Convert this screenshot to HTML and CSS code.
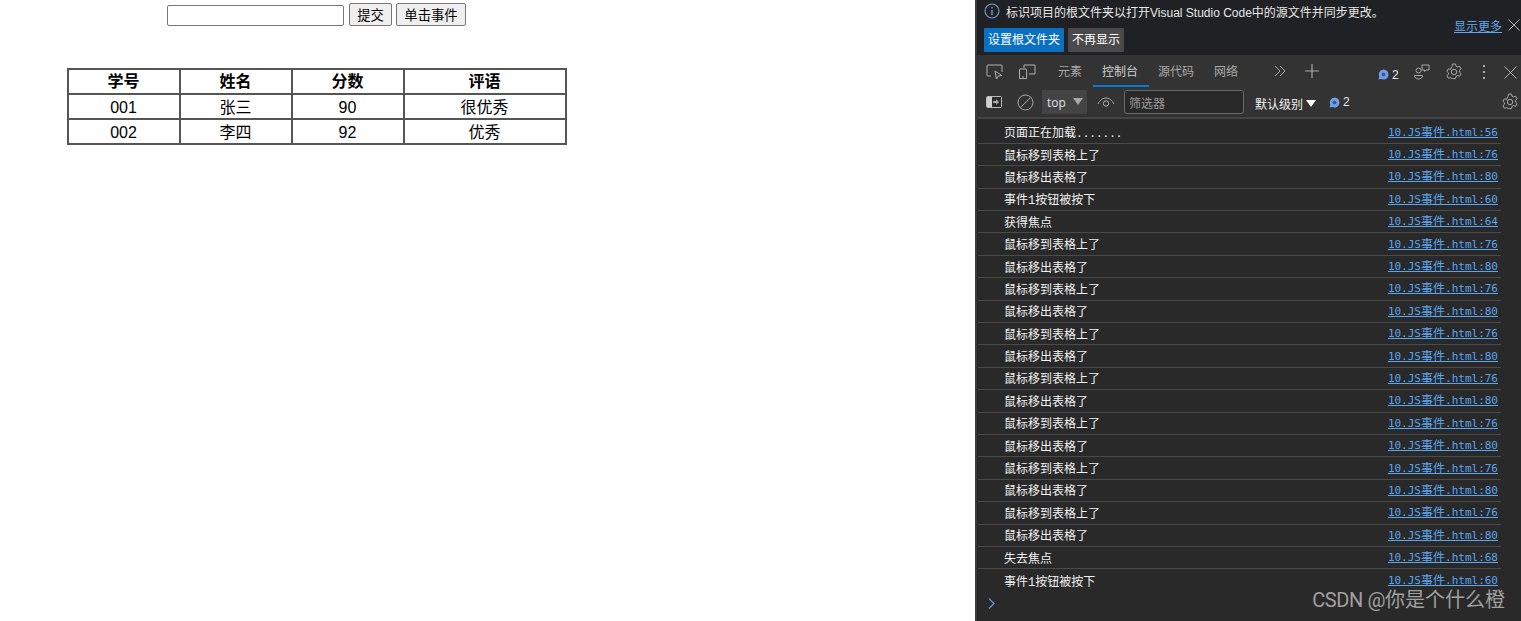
FILE: index.html
```html
<!DOCTYPE html>
<html lang="zh">
<head>
<meta charset="utf-8">
<title>JS事件</title>
<link rel="stylesheet" href="styles.css">
</head>
<body>
<main class="page">
  <form class="form">
    <input class="field" type="text">
    <button class="btn" type="button">提交</button>
    <button class="btn wide" type="button">单击事件</button>
  </form>
  <table class="grades">
    <tr><th class="c1">学号</th><th class="c1">姓名</th><th class="c1">分数</th><th class="c4">评语</th></tr>
    <tr><td>001</td><td>张三</td><td>90</td><td>很优秀</td></tr>
    <tr><td>002</td><td>李四</td><td>92</td><td>优秀</td></tr>
  </table>
</main>
<aside class="devtools">
  <div class="info">
    <div class="info-top">
      <svg class="info-icon" width="16" height="16" viewBox="0 0 16 16"><circle cx="8" cy="8" r="7" fill="none" stroke="#6f9fd8" stroke-width="1.1"/><path d="M8 4v1.6M8 7v5" stroke="#8db4e6" stroke-width="1.2"/></svg>
      <span>标识项目的根文件夹以打开Visual Studio Code中的源文件并同步更改。</span>
    </div>
    <div class="info-bottom">
      <span class="ibtn primary">设置根文件夹</span>
      <span class="ibtn">不再显示</span>
      <span class="more">显示更多</span>
      <svg class="x" width="12" height="12" viewBox="0 0 12 12"><path d="M.5.5l11 11M11.500.5l-11 11" stroke="#b5b5b5" fill="none"/></svg>
    </div>
  </div>
  <div class="tabs">
    <svg class="tool-a" width="18" height="16" viewBox="0 0 18 16"><path d="M5 12H2a1 1 0 0 1-1-1V2a1 1 0 0 1 1-1h13a1 1 0 0 1 1 1v6M9 7l1.500 8 1.800-3 3.500-.5z" fill="none" stroke="#b0b0b0"/></svg>
    <svg class="tool-b" width="17" height="16" viewBox="0 0 17 16"><path d="M5 4V1h11v9H10M1 5h6a.6.6 0 0 1 .6.600v9H.5V5.600A.6.600 0 0 1 1 5zM3 13h2" fill="none" stroke="#b0b0b0"/></svg>
    <span class="tab first">元素</span>
    <span class="tab active">控制台</span>
    <span class="tab">源代码</span>
    <span class="tab">网络</span>
    <svg class="chev" width="12" height="12" viewBox="0 0 12 12"><path d="M1 1l5 5-5 5M6 1l5 5-5 5" fill="none" stroke="#a8a8a8"/></svg>
    <svg class="plus" width="14" height="14" viewBox="0 0 14 14"><path d="M7 0v14M0 7h14" stroke="#a8a8a8" stroke-width="1.200"/></svg>
    <span class="badge tabs-badge"><svg width="11" height="11" viewBox="0 0 11 11"><path d="M5.500.5a5 5 0 1 1-2 9.600L.5 10.500l.8-2.800A5 5 0 0 1 5.500.5z" fill="#6f9fe8"/><circle cx="5.500" cy="5.500" r="2" fill="#3a5a98"/></svg>2</span>
    <svg class="people" width="16" height="16" viewBox="0 0 16 16"><circle cx="4.500" cy="6.500" r="2.500" fill="none" stroke="#a8a8a8"/><path d="M.5 11.500h8c0 2-1.500 3.500-4 3.500s-4-1.500-4-3.500zM8 1h7v5h-3l-1.500 1.500V6H8z" fill="none" stroke="#a8a8a8"/></svg>
    <svg class="gear" width="18" height="18" viewBox="0 0 18 18"><circle cx="9" cy="9" r="2.700" fill="none" stroke="#a8a8a8"/><path d="M7.500 1h3l.5 2.200 1.500.8 2.100-.7 1.500 2.600-1.600 1.500v1.800l1.600 1.500-1.500 2.600-2.100-.7-1.500.8-.5 2.200h-3L7 15.400l-1.500-.8-2.100.7-1.500-2.600 1.600-1.500V9.900L1.900 8.400l1.500-2.600 2.100.7L7 3.200z" fill="none" stroke="#a8a8a8"/></svg>
    <svg class="dots" width="4" height="14" viewBox="0 0 4 14"><path d="M1 0h2v2H1zM1 6h2v2H1zM1 12h2v2H1z" fill="#b0b0b0"/></svg>
    <svg class="tabs-x" width="13" height="13" viewBox="0 0 13 13"><path d="M.5.500l12 12M12.500.5l-12 12" stroke="#b5b5b5" fill="none"/></svg>
  </div>
  <div class="filter">
    <svg class="sidebar" width="16" height="12" viewBox="0 0 16 12"><rect x=".5" y=".5" width="15" height="11" rx="1" fill="#2a2a2a" stroke="#bcbcbc"/><rect x="1" y="1" width="5" height="10" fill="#d0d0d0"/><path d="M7 6h4" stroke="#a8a8a8" stroke-width="2" fill="none"/><path d="M10 3l3 3-3 3z" fill="#a8a8a8"/></svg>
    <svg class="clear" width="17" height="17" viewBox="0 0 17 17"><circle cx="8.500" cy="8.500" r="7.500" fill="none" stroke="#a8a8a8"/><path d="M3.200 13.800L13.800 3.200" stroke="#a8a8a8"/></svg>
    <span class="top">top<i class="caret"></i></span>
    <svg class="eye" width="18" height="10" viewBox="0 0 18 10"><path d="M1 7c2-4 5-6 8-6s6 2 8 6" fill="none" stroke="#b0b0b0"/><circle cx="9" cy="6.500" r="2.700" fill="none" stroke="#b0b0b0"/></svg>
    <span class="search">筛选器</span>
    <span class="level">默认级别<i class="caret white"></i></span>
    <span class="badge filter-badge"><svg width="11" height="11" viewBox="0 0 11 11"><path d="M5.500.5a5 5 0 1 1-2 9.600L.5 10.500l.8-2.800A5 5 0 0 1 5.500.5z" fill="#6f9fe8"/><circle cx="5.500" cy="5.500" r="2" fill="#3a5a98"/></svg>2</span>
    <svg class="gear filter-gear" width="18" height="18" viewBox="0 0 18 18"><circle cx="9" cy="9" r="2.700" fill="none" stroke="#a8a8a8"/><path d="M7.500 1h3l.5 2.200 1.500.8 2.100-.7 1.500 2.600-1.600 1.500v1.800l1.600 1.500-1.500 2.600-2.100-.7-1.500.8-.5 2.200h-3L7 15.400l-1.500-.8-2.100.7-1.500-2.600 1.600-1.500V9.900L1.900 8.400l1.500-2.600 2.100.7L7 3.200z" fill="none" stroke="#a8a8a8"/></svg>
  </div>
  <div class="log">
    <div class="row"><span>页面正在加载<b>.......</b></span><a>10.JS<b>事件</b>.html:56</a></div>
    <div class="row"><span>鼠标移到表格上了</span><a>10.JS<b>事件</b>.html:76</a></div>
    <div class="row"><span>鼠标移出表格了</span><a>10.JS<b>事件</b>.html:80</a></div>
    <div class="row"><span>事件1按钮被按下</span><a>10.JS<b>事件</b>.html:60</a></div>
    <div class="row"><span>获得焦点</span><a>10.JS<b>事件</b>.html:64</a></div>
    <div class="row"><span>鼠标移到表格上了</span><a>10.JS<b>事件</b>.html:76</a></div>
    <div class="row"><span>鼠标移出表格了</span><a>10.JS<b>事件</b>.html:80</a></div>
    <div class="row"><span>鼠标移到表格上了</span><a>10.JS<b>事件</b>.html:76</a></div>
    <div class="row"><span>鼠标移出表格了</span><a>10.JS<b>事件</b>.html:80</a></div>
    <div class="row"><span>鼠标移到表格上了</span><a>10.JS<b>事件</b>.html:76</a></div>
    <div class="row"><span>鼠标移出表格了</span><a>10.JS<b>事件</b>.html:80</a></div>
    <div class="row"><span>鼠标移到表格上了</span><a>10.JS<b>事件</b>.html:76</a></div>
    <div class="row"><span>鼠标移出表格了</span><a>10.JS<b>事件</b>.html:80</a></div>
    <div class="row"><span>鼠标移到表格上了</span><a>10.JS<b>事件</b>.html:76</a></div>
    <div class="row"><span>鼠标移出表格了</span><a>10.JS<b>事件</b>.html:80</a></div>
    <div class="row"><span>鼠标移到表格上了</span><a>10.JS<b>事件</b>.html:76</a></div>
    <div class="row"><span>鼠标移出表格了</span><a>10.JS<b>事件</b>.html:80</a></div>
    <div class="row"><span>鼠标移到表格上了</span><a>10.JS<b>事件</b>.html:76</a></div>
    <div class="row"><span>鼠标移出表格了</span><a>10.JS<b>事件</b>.html:80</a></div>
    <div class="row"><span>失去焦点</span><a>10.JS<b>事件</b>.html:68</a></div>
    <div class="row last"><span>事件1按钮被按下</span><a>10.JS<b>事件</b>.html:60</a></div>
  </div>
  <div class="prompt">
    <svg width="7" height="11" viewBox="0 0 7 11"><path d="M1 .5l5 5-5 5" fill="none" stroke="#5f94e0" stroke-width="1.300"/></svg>
  </div>
  <div class="watermark"><span class="wm-latin">CSDN @</span>你是个什么橙</div>
</aside>
</body>
</html>
```
FILE: styles.css
```css
* { box-sizing: border-box; }
html, body { margin: 0; height: 100%; }
body {
  display: flex;
  height: 621px;
  overflow: hidden;
  background: #fff;
  font-family: "Liberation Sans", "Noto Sans CJK SC", sans-serif;
}
.page { width: 975px; flex: none; }
.form {
  width: 633px;
  padding-top: 3px;
  display: flex;
  justify-content: center;
  align-items: center;
  gap: 4px;
  height: 26px;
}
.field {
  width: 177px;
  height: 21px;
  margin: 2px 1px 0 0;
  border: 1px solid #767676;
  border-radius: 2px;
  background: #fff;
}
.btn {
  height: 23px;
  width: 43px;
  padding: 0;
  font: 13.33px "Liberation Sans", "Noto Sans CJK SC", sans-serif;
  color: #000;
  background: #efefef;
  border: 1px solid #767676;
  border-radius: 2px;
}
.wide { width: 70px; }
.grades {
  margin: 42px 0 0 67px;
  border-collapse: separate;
  border-spacing: 0;
  border: 1px solid #555;
  border-width: 1px;
  table-layout: fixed;
  width: 500px;
  font-size: 16px;
  color: #000;
}
.grades th, .grades td {
  height: 25px;
  padding: 0 1px 0 0;
  text-align: center;
  border: 1px solid #555;
  font-weight: normal;
  line-height: 23px;
}
.grades td { padding-top: 2px; line-height: 21px; }
.grades th { font-weight: bold; }
.c1 { width: 112px; }
.devtools {
  position: relative;
  width: 546px;
  flex: none;
  background: #292929;
  color: #fff;
  font-size: 12px;
  display: flex;
  flex-direction: column;
  border-left: 2px solid #3a3a3a;
  overflow: hidden;
}
.info { height: 55px; background: #202124; padding: 2px 0 0 7px; flex: none; }
.info-top { display: flex; align-items: center; gap: 6px; height: 18px; color: #e8e8e8; }
.info-bottom { display: flex; align-items: center; gap: 4px; margin-top: 8px; position: relative; }
.ibtn {
  height: 24px;
  line-height: 25px;
  padding: 0 4px;
  background: #4a4a4a;
  border-radius: 1px;
  color: #fff;
}
.primary { background: #0a70c2; }
.more {
  margin-left: auto;
  margin-right: 2px;
  color: #62a8e8;
  text-decoration: underline;
  position: relative;
  top: -15px;
}
.x { margin-right: 1px; position: relative; top: -15px; }
.tabs {
  height: 32px;
  background: #333;
  display: flex;
  align-items: center;
  padding-left: 9px;
  flex: none;
}
.tabs > svg { margin-top: 2px; }
.tool-b { margin-left: 15px; margin-right: 14px; }
.tab { color: #a8a8a8; height: 32px; line-height: 35px; padding: 0 9px; margin-right: 2px; }
.first { margin-right: 1px; padding: 0 10px 0 8px; }
.active { color: #d0d0d0; border-bottom: 2px solid #0a78d4; width: 56px; padding: 0 9px; margin-right: 0; }
.tabs .chev { margin-left: 25px; margin-top: 0; }
.tabs .plus { margin-left: 19px; margin-top: 0; }
.badge { display: inline-flex; align-items: center; gap: 3px; color: #e8e8e8; font-size: 12px; }
.tabs-badge { margin-left: 59px; margin-top: 7px; }
.people { margin-left: 15px; }
.tabs .gear { margin-left: 15px; }
.dots { margin-left: 19px; }
.tabs-x { margin-left: 18px; }
.filter {
  height: 32px;
  background: #333;
  border-bottom: 2px solid #444;
  display: flex;
  align-items: center;
  padding-left: 9px;
  flex: none;
}
.clear { margin-left: 15px; }
.top {
  margin-left: 8px;
  width: 45px;
  height: 24px;
  background: #444;
  line-height: 26px;
  padding-left: 5px;
  color: #e0e0e0;
  font-size: 12px;
  font-family: "Open Sans", sans-serif;
}
.caret {
  display: inline-block;
  margin-left: 7px;
  border: 5px solid transparent;
  border-top: 7px solid #a8a8a8;
  border-bottom: 0;
  position: relative;
  top: -2px;
}
.caret.white { border-top-color: #fff; margin-left: 3px; }
.eye { margin-left: 10px; }
.search {
  margin-left: 9px;
  width: 120px;
  height: 24px;
  border: 1px solid #6a6a6a;
  border-radius: 3px;
  background: #292929;
  padding-left: 4px;
  line-height: 26px;
  color: #9a9a9a;
}
.level { margin-left: 11px; color: #f0f0f0; white-space: nowrap; padding-top: 2px; }
.filter-badge { margin-left: 13px; }
.filter-gear { margin-left: auto; margin-right: 2px; }
.log { flex: 1; overflow: hidden; padding: 2.5px 20px 0 1px; }
.row {
  height: 22.4px;
  display: flex;
  justify-content: space-between;
  align-items: center;
  padding: 0 3px 0 26px;
  border-bottom: 1px solid #4a4a4a;
}
.last { border-bottom: 0; }
.row span { color: #f2f2f2; font-family: "Liberation Mono", "Noto Sans CJK SC", monospace; font-size: 12px; }
.row span b { font: 11px "DejaVu Sans Mono", monospace; }
.row a { color: #5aa6ef; text-decoration: underline; font-family: "DejaVu Sans Mono", "Noto Sans CJK SC", monospace; font-size: 11px; }
.row a b { font: 12px/1 "Noto Sans CJK SC", sans-serif; vertical-align: -1px; }
.prompt { height: 27px; flex: none; padding: 4px 0 0 11px; }
.watermark {
  position: absolute;
  right: 16px;
  bottom: 8px;
  font-size: 20px;
  color: #a0a0a0;
}
.wm-latin { font-family: Roboto, sans-serif; letter-spacing: -.4px; }
```
